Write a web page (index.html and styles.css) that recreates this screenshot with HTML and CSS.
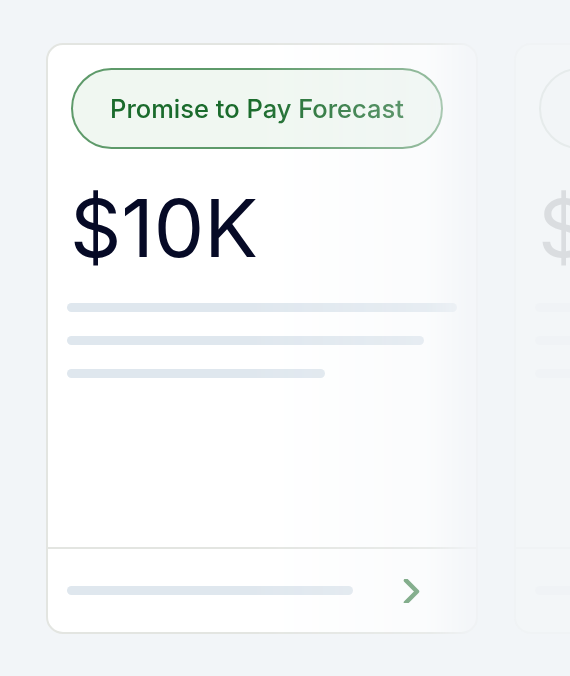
FILE: index.html
```html
<!DOCTYPE html>
<html lang="en">
<head>
<meta charset="utf-8">
<title>Promise to Pay Forecast</title>
<link rel="stylesheet" href="styles.css">
</head>
<body>
<div class="viewport">
<div class="track">
  <div class="card">
    <div class="card-body">
      <span class="pill">Promise to Pay Forecast</span>
      <div class="amount">$10K</div>
      <div class="lines">
        <span class="line line-a"></span>
        <span class="line line-b"></span>
        <span class="line line-c"></span>
      </div>
    </div>
    <div class="card-foot">
      <span class="line line-foot"></span>
      <svg class="chev" width="24" height="24" viewBox="0 0 24 24" aria-hidden="true"><path d="M6 1.5 L17 12.5 L6 23.5" fill="none" stroke="#4f8c5a" stroke-width="4.5" stroke-linecap="round" stroke-linejoin="round"/></svg>
    </div>
  </div>
  <div class="card card-next">
    <div class="card-body">
      <span class="pill">Promise to Pay Forecast</span>
      <div class="amount">$10K</div>
      <div class="lines">
        <span class="line line-a"></span>
        <span class="line line-b"></span>
        <span class="line line-c"></span>
      </div>
    </div>
    <div class="card-foot">
      <span class="line line-foot"></span>
      <svg class="chev" width="24" height="24" viewBox="0 0 24 24" aria-hidden="true"><path d="M6 1.5 L17 12.5 L6 23.5" fill="none" stroke="#4f8c5a" stroke-width="4.5" stroke-linecap="round" stroke-linejoin="round"/></svg>
    </div>
  </div>
</div>
</div>
</body>
</html>
```

FILE: styles.css
```css
html, body {
  margin: 0;
  padding: 0;
  background: #f2f5f8;
  font-family: Inter, "Noto Sans", "Liberation Sans", sans-serif;
}

.viewport {
  width: 570px;
  height: 676px;
  overflow: hidden;
}

.track {
  display: flex;
  gap: 36px;
  padding: 43px 0 0 46px;
  width: 1000px;
  -webkit-mask-image: linear-gradient(90deg, #000 0px, #000 250px, rgba(0,0,0,0.64) 430px, rgba(0,0,0,0.16) 468px, rgba(0,0,0,0.1) 524px);
  mask-image: linear-gradient(90deg, #000 0px, #000 250px, rgba(0,0,0,0.64) 430px, rgba(0,0,0,0.16) 468px, rgba(0,0,0,0.1) 524px);
}

.card {
  box-sizing: border-box;
  flex: 0 0 432px;
  height: 591px;
  background: #ffffff;
  border: 2px solid #e3e5e1;
  border-radius: 17px;
  display: flex;
  flex-direction: column;
}

.card-next {
  filter: grayscale(0.7);
}

.card-body {
  flex: 1;
  padding: 23px 19px 0;
  display: flex;
  flex-direction: column;
  align-items: flex-start;
}

.pill {
  box-sizing: border-box;
  margin-left: 4px;
  height: 81px;
  width: 372px;
  display: flex;
  align-items: center;
  justify-content: center;
  border: 2px solid #5e9a6a;
  border-radius: 41px;
  background: #f0f7f1;
  color: #1a6b2c;
  font-size: 25.5px;
  font-weight: 500;
}

.amount {
  margin: 40px 0 0 3px;
  font-size: 80px;
  line-height: 78px;
  font-weight: 400;
  color: #060a26;
}

.lines {
  margin-top: 36px;
  display: flex;
  flex-direction: column;
  gap: 24px;
}

.line {
  display: block;
  height: 9px;
  border-radius: 5px;
  background: #dfe7ee;
}

.line-a { width: 390px; }
.line-b { width: 357px; }
.line-c { width: 258px; }
.line-foot { width: 286px; }

.card-foot {
  height: 83px;
  border-top: 2px solid #e3e5e1;
  padding: 0 19px;
  display: flex;
  align-items: center;
  gap: 47px;
}

.chev {
  display: block;
}
```
